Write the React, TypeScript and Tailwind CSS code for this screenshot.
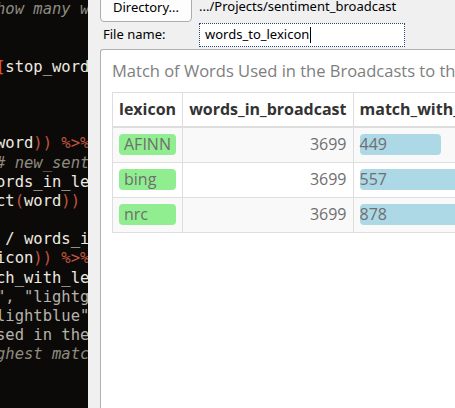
import React from 'react'

type Seg = [string, string, boolean?]

const TXT = '#eeeae0'
const OP = '#c25440'
const BR = '#e4572e'
const CMT = '#8e8b80'
const STR = '#b5b3ab'

const codeLines: Seg[][] = [
  [['how many wo', CMT, true]],
  [],
  [],
  [['[', BR], ['stop_words', TXT]],
  [],
  [],
  [],
  [['word', TXT], [')) %>%', OP]],
  [['# new_sentim', CMT, true]],
  [['ords_in_lex', TXT]],
  [['ct', TXT], ['(', OP], ['word', TXT], ['))', OP]],
  [],
  [[' / words_in', TXT]],
  [['icon', TXT], [')) %>%', OP]],
  [['ch_with_lex', TXT]],
  [['", "lightgr', STR]],
  [['lightblue"', STR]],
  [['sed in the ', STR]],
  [['ghest match', CMT, true]],
  [],
  [],
  [],
]

const rows = [
  { lexicon: 'AFINN', words: 3699, match: 449 },
  { lexicon: 'bing', words: 3699, match: 557 },
  { lexicon: 'nrc', words: 3699, match: 878 },
]
const maxMatch = Math.max(...rows.map(r => r.match))

export default function App() {
  return (
    <div className="flex h-[408px] w-[455px] overflow-hidden bg-[#f0f0f0]">
      <CodePane />

      <div className="flex min-w-0 flex-1 flex-col pl-[12px] font-['Noto_Sans',sans-serif] text-[13px] text-black">
        <div className="-mt-[8px] flex h-[30px] shrink-0 items-center">
          <button className="h-full w-[92px] shrink-0 rounded-[4px] border border-[#adadad] bg-[#fdfdfd] pt-[1px] text-black">
            Directory...
          </button>
          <span className="ml-[7px] whitespace-nowrap">.../Projects/sentiment_broadcast</span>
        </div>

        <div className="mt-[1px] flex h-[24px] shrink-0 items-center">
          <label className="ml-[3px] w-[96px] shrink-0">File name:</label>
          <div className="flex h-full w-[206px] items-center border border-dotted border-[#22457a] bg-white pl-[5px]">
            <span>words_to_lexicon</span>
            <span className="ml-px h-[16px] w-px bg-black" />
          </div>
        </div>

        <div className="mt-[2px] min-h-0 flex-1 overflow-hidden rounded-tl-[3px] border-l border-t border-[#b0b0b0] bg-white pl-[11px] font-['Open_Sans',sans-serif]">
          <p className="whitespace-nowrap pt-[9px] text-[16.5px] leading-[23px] text-[#7e7e7e]">
            Match of Words Used in the Broadcasts to the Lexicons
          </p>

          <table className="mt-[10px] border-collapse text-[16px] leading-[21px]">
            <thead>
              <tr>
                <th className="w-[70px] border border-b-2 border-[#dddddd] px-[6px] py-[6px] text-left font-bold text-[#333333]">lexicon</th>
                <th className="w-[172px] border border-b-2 border-[#dddddd] px-[6px] py-[6px] text-left font-bold text-[#333333]">words_in_broadcast</th>
                <th className="w-[180px] whitespace-nowrap border border-b-2 border-[#dddddd] px-[6px] py-[6px] text-left font-bold text-[#333333]">match_with_lexicon</th>
              </tr>
            </thead>
            <tbody className="text-[#6f6f6f]">
              {rows.map((r, i) => (
                <tr key={r.lexicon} className={i % 2 === 0 ? 'bg-[#f9f9f9]' : 'bg-white'}>
                  <td className="border border-[#dddddd] px-[6px] pb-[7px] pt-[6px]">
                    <span className="block rounded-[4px] bg-[#90ee90] pl-[5px]">{r.lexicon}</span>
                  </td>
                  <td className="border border-[#dddddd] px-[6px] pb-[7px] pt-[6px] text-right">{r.words}</td>
                  <td className="border border-[#dddddd] px-[6px] pb-[7px] pt-[6px]">
                    <span
                      className="block whitespace-nowrap rounded-[4px] bg-[#add8e6]"
                      style={{ width: Math.round((r.match / maxMatch) * 158) }}
                    >
                      {r.match}
                    </span>
                  </td>
                </tr>
              ))}
            </tbody>
          </table>
        </div>
      </div>
    </div>
  )
}

function CodePane() {
  return (
    <div className="h-full w-[88px] shrink-0 overflow-hidden bg-[#0c0a08] font-['DejaVu_Sans_Mono',monospace] text-[15.5px] leading-[19.2px]">
      <div className="-ml-[4px]">
        {codeLines.map((line, i) => (
          <div key={i} className="h-[19.2px] whitespace-pre">
            {line.map(([text, color, italic], j) => (
              <span key={j} className={italic ? 'italic' : ''} style={{ color }}>
                {text}
              </span>
            ))}
          </div>
        ))}
      </div>
    </div>
  )
}
